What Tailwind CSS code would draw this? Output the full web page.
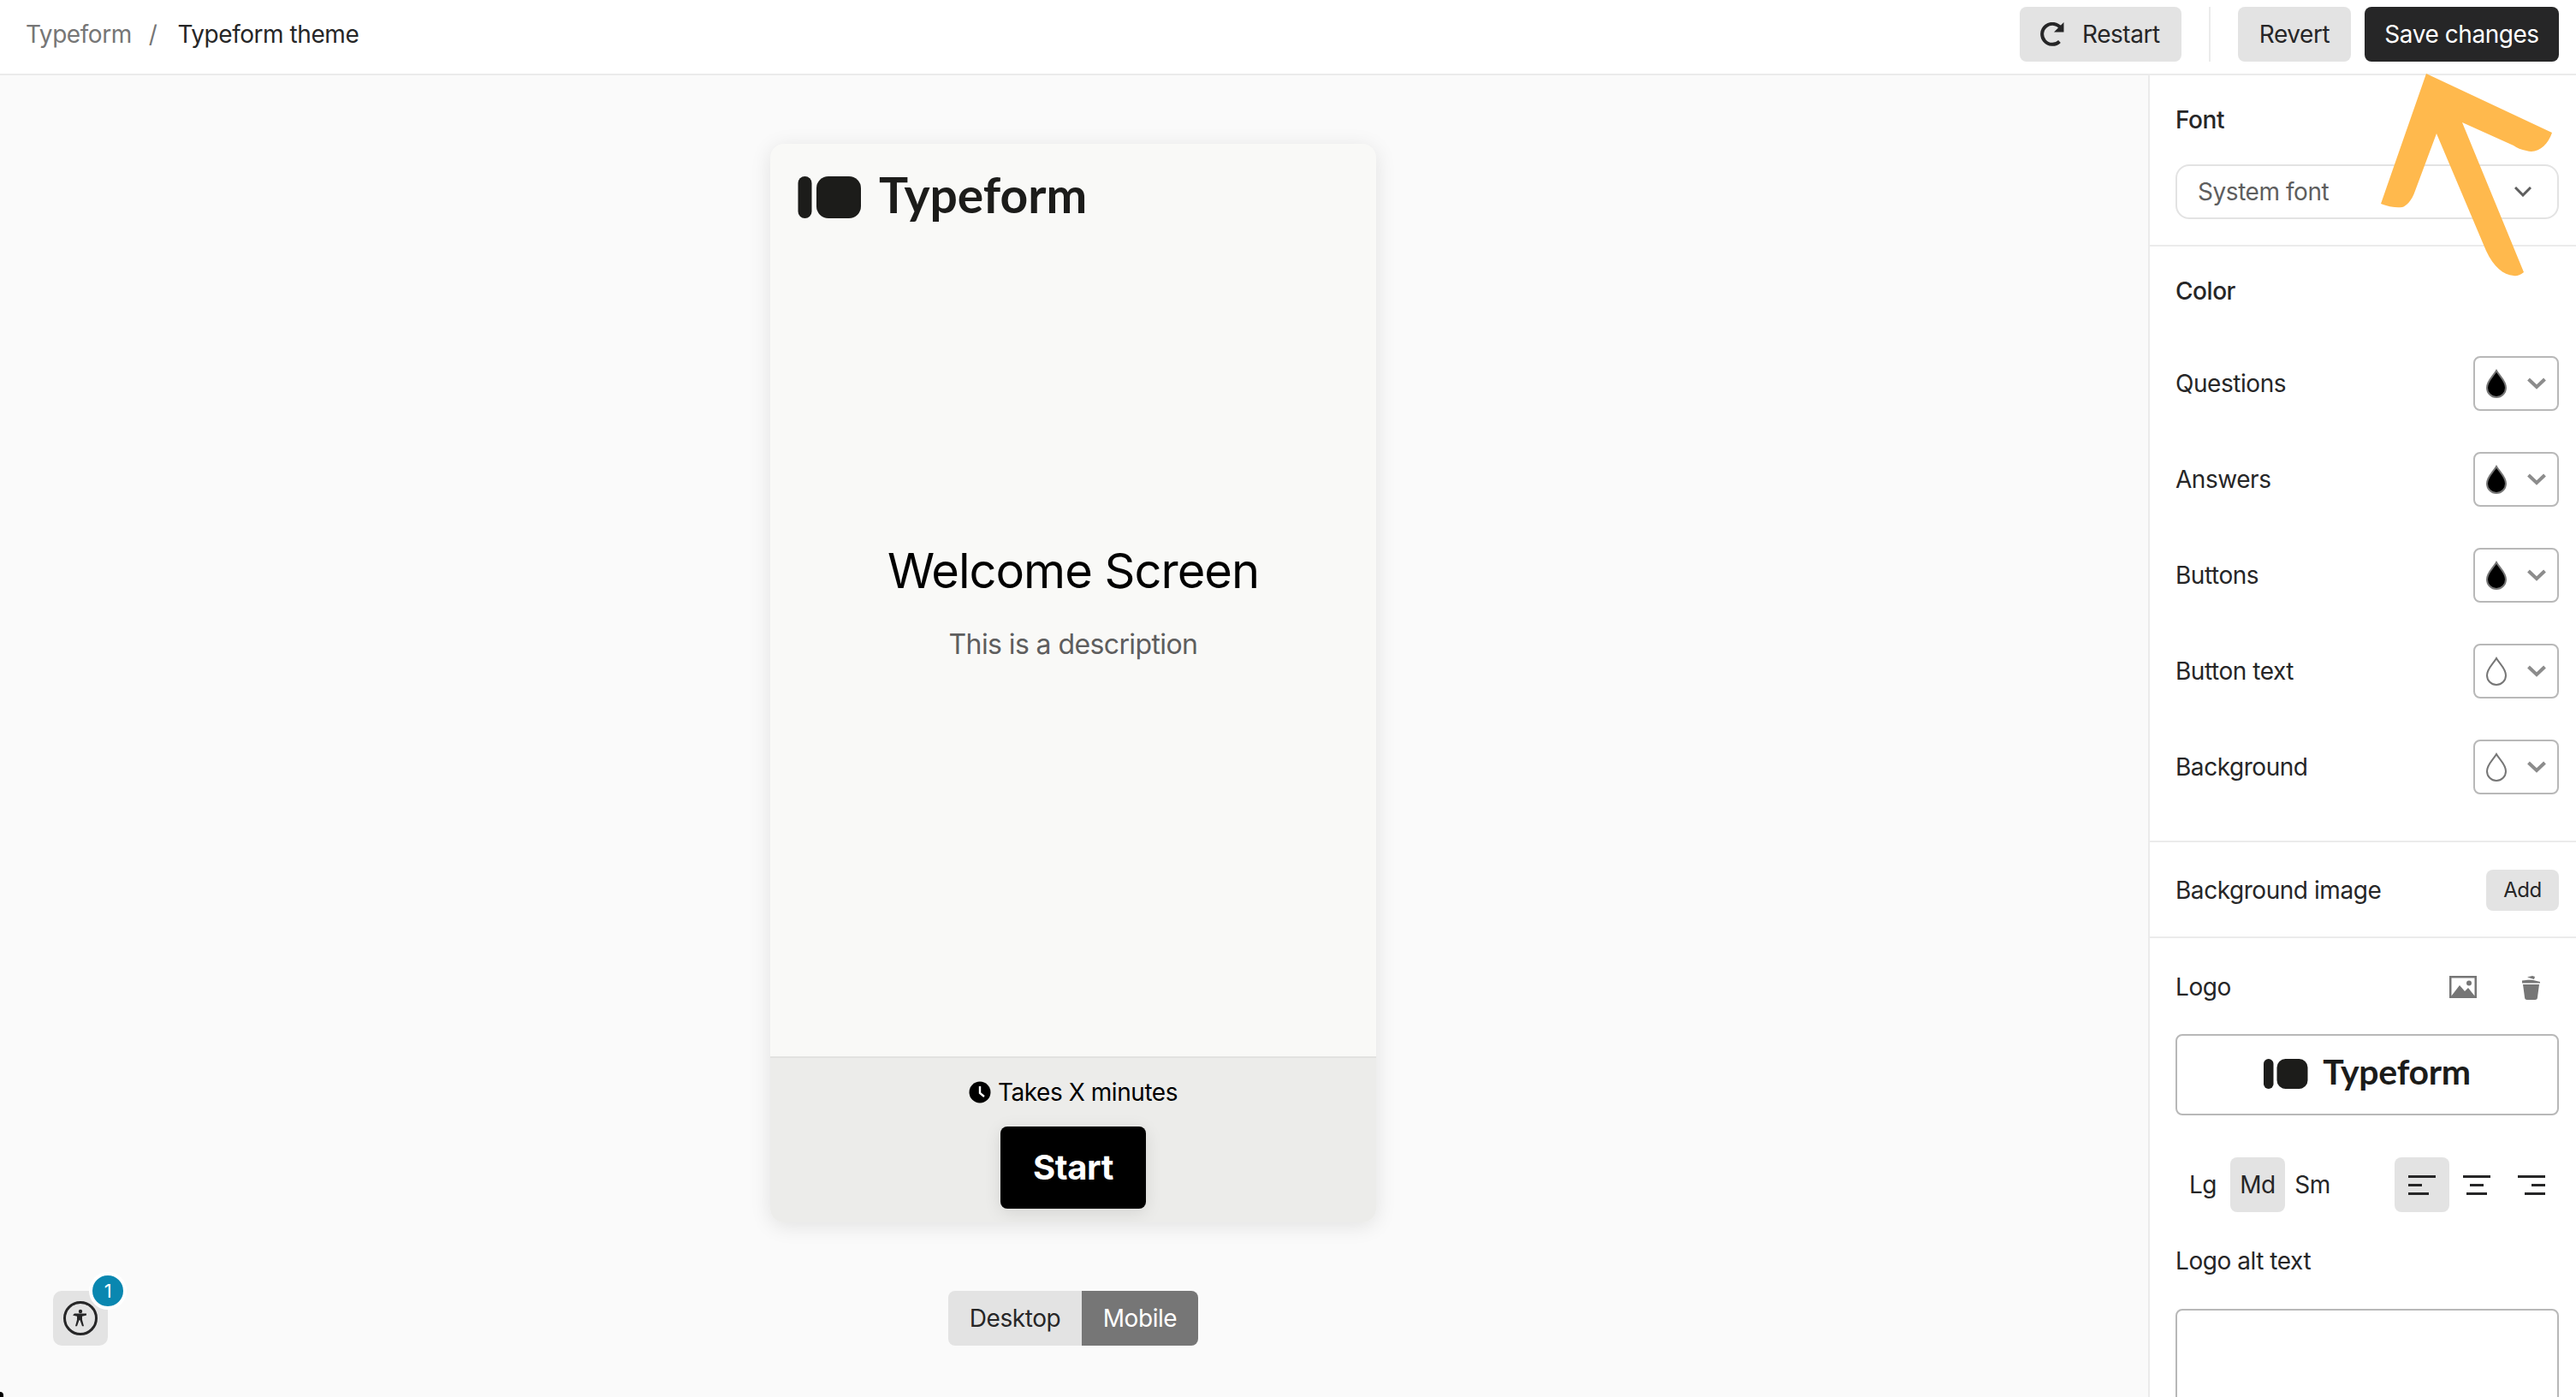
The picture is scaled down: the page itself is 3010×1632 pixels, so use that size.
<!DOCTYPE html>
<html lang="en">
<head>
    <meta charset="UTF-8">
    <title>Typeform theme</title>
    <script src="https://cdn.jsdelivr.net/npm/@tailwindcss/browser@4"></script>
</head>
<body class="font-['Inter',sans-serif] text-[28px] leading-[40px] tracking-[-0.45px] text-[#262627] bg-white">
<div class="relative w-[3010px] h-[1632px] overflow-hidden flex flex-col">

    <!-- top bar -->
    <header class="h-[88px] shrink-0 border-b-2 border-[#ebebeb] flex items-start justify-between pl-[30px] pr-[20px] pt-[8px] bg-white">
        <div class="flex items-center h-[64px]">
            <span class="text-[#767676]">Typeform</span>
            <span class="text-[#767676] ml-[20px] mr-[24px]">/</span>
            <span>Typeform theme</span>
        </div>
        <div class="flex items-center h-[64px]">
            <button class="h-[64px] w-[189px] rounded-[8px] bg-[#e3e3e3] flex items-center pl-[24px]">
                <svg class="w-[28px] h-[28px] mr-[21px]" viewBox="0 0 28 28" fill="none">
                    <path d="M22.500 22.500A12 12 0 1 1 24 7" stroke="#262627" stroke-width="4"/>
                    <path d="M27.500 0v11.500h-11.500z" fill="#262627"/>
                </svg>
                <span>Restart</span>
            </button>
            <div class="w-[2px] h-[64px] bg-[#ebebeb] ml-[32px] mr-[32px]"></div>
            <button class="h-[64px] w-[132px] rounded-[8px] bg-[#e3e3e3] text-center">Revert</button>
            <button class="h-[64px] w-[227px] rounded-[8px] bg-[#262627] text-white text-center ml-[16px]">Save changes</button>
        </div>
    </header>

    <div class="flex flex-1 min-h-0">
        <!-- preview canvas -->
        <main class="relative flex-1 bg-[#fafafa] flex flex-col items-center pr-[2px]">
            <div class="mt-[80px] w-[708px] h-[1260px] rounded-[16px] bg-[#f9f9f7] shadow-[0_4px_24px_rgba(0,0,0,0.10)] flex flex-col overflow-hidden shrink-0">
                <div class="h-[1066px] flex flex-col">
                    <div class="flex items-center pl-[32px] pt-[38px] h-[87px]">
                        <svg class="w-[74px] h-[49px]" viewBox="0 0 74 49">
                            <rect x="0.5" y="0" width="16" height="49" rx="8" fill="#1c1c1a"/>
                            <rect x="22" y="0" width="52" height="49" rx="14" fill="#1c1c1a"/>
                        </svg>
                        <span class="ml-[21px] pb-[8px] font-['Lato',sans-serif] font-bold tracking-normal text-[#1c1c1a] text-[57px] leading-[40px]">Typeform</span>
                    </div>
                    <h1 class="mt-[376px] text-center text-black text-[56px] tracking-[-1px] leading-[72px]">Welcome Screen</h1>
                    <p class="mt-[28px] text-center text-[#5e5e5e] text-[32px] tracking-[-0.6px] leading-[44px]">This is a description</p>
                </div>
                <div class="flex-1 border-t-2 border-[#e2e2e0] bg-[#ececea] flex flex-col items-center pt-[20px]">
                    <div class="flex items-center h-[40px] text-black">
                        <svg class="w-[26px] h-[26px] mr-[8px]" viewBox="0 0 26 26">
                            <circle cx="13" cy="13" r="12.5" fill="#000"/>
                            <path d="M13 6v8l5 4" fill="none" stroke="#fff" stroke-width="2.4"/>
                        </svg>
                        <span>Takes X minutes</span>
                    </div>
                    <button class="mt-[20px] w-[170px] h-[96px] rounded-[8px] bg-black text-white font-bold text-[40px] tracking-[-0.4px] shadow-[0_4px_20px_rgba(0,0,0,0.10)]">Start</button>
                </div>
            </div>

            <div class="mt-[80px] flex h-[64px] rounded-[8px] overflow-hidden shrink-0">
                <button class="w-[156px] bg-[#e3e3e3]">Desktop</button>
                <button class="w-[136px] bg-[#767676] text-white">Mobile</button>
            </div>

            <!-- accessibility widget -->
            <div class="absolute left-[62px] top-[1420px] w-[64px] h-[64px] rounded-[10px] bg-[#e3e3e3] flex items-center justify-center">
                <svg class="w-[42px] h-[42px]" viewBox="0 0 42 42" fill="none">
                    <circle cx="21" cy="21" r="18.5" stroke="#262627" stroke-width="3"/>
                    <circle cx="21" cy="13" r="2.200" fill="#262627"/>
                    <path d="M14 15.500h14v2l-5 1.200v4l2 7.500h-2l-2.500-7-1 0-2.500 7h-2l2-7.500v-4l-5-1.200z" fill="#262627"/>
                </svg>
                <div class="absolute left-[42px] -top-[22px] w-[44px] h-[44px] rounded-full bg-[#0a87b0] border-4 border-white text-white text-[22px] leading-[36px] text-center">1</div>
            </div>
        </main>

        <!-- theme settings -->
        <aside class="w-[500px] shrink-0 border-l-2 border-[#ebebeb] bg-white">
            <section class="pl-[30px] pr-[20px] pt-[32px] pb-[30px] border-b-2 border-[#ebebeb]">
                <div class="font-medium">Font</div>
                <div class="mt-[32px] h-[64px] rounded-[16px] border-2 border-[#e3e3e3] flex items-center justify-between pl-[24px] pr-[30px] text-[#5e5e5e]">
                    <span>System font</span>
                    <svg class="w-[20px] h-[12px]" viewBox="0 0 20 12" fill="none"><path d="M1 1l9 9 9-9" stroke="#5e5e5e" stroke-width="3"/></svg>
                </div>
            </section>

            <section class="pl-[30px] pr-[20px] pt-[32px] pb-[54px] border-b-2 border-[#ebebeb]">
                <div class="font-medium">Color</div>
                <div class="mt-[56px] flex flex-col gap-[48px]">
                    <div class="flex items-center justify-between h-[64px]">
                        <span>Questions</span>
                        <div class="w-[100px] h-[64px] rounded-[8px] border-2 border-[#b8b8b8] flex items-center justify-between pl-[12px] pr-[13px]">
                            <svg class="w-[26px] h-[34px]" viewBox="0 0 26 34"><path d="M13 2C9 9 2 14 2 22a11 11 0 0 0 22 0C24 14 17 9 13 2z" fill="#000" stroke="#767676" stroke-width="2"/></svg>
                            <svg class="w-[22px] h-[14px]" viewBox="0 0 22 14" fill="none"><path d="M1.500 2l9.500 9 9.500-9" stroke="#8c8c8c" stroke-width="4"/></svg>
                        </div>
                    </div>
                    <div class="flex items-center justify-between h-[64px]">
                        <span>Answers</span>
                        <div class="w-[100px] h-[64px] rounded-[8px] border-2 border-[#b8b8b8] flex items-center justify-between pl-[12px] pr-[13px]">
                            <svg class="w-[26px] h-[34px]" viewBox="0 0 26 34"><path d="M13 2C9 9 2 14 2 22a11 11 0 0 0 22 0C24 14 17 9 13 2z" fill="#000" stroke="#767676" stroke-width="2"/></svg>
                            <svg class="w-[22px] h-[14px]" viewBox="0 0 22 14" fill="none"><path d="M1.500 2l9.500 9 9.500-9" stroke="#8c8c8c" stroke-width="4"/></svg>
                        </div>
                    </div>
                    <div class="flex items-center justify-between h-[64px]">
                        <span>Buttons</span>
                        <div class="w-[100px] h-[64px] rounded-[8px] border-2 border-[#b8b8b8] flex items-center justify-between pl-[12px] pr-[13px]">
                            <svg class="w-[26px] h-[34px]" viewBox="0 0 26 34"><path d="M13 2C9 9 2 14 2 22a11 11 0 0 0 22 0C24 14 17 9 13 2z" fill="#000" stroke="#767676" stroke-width="2"/></svg>
                            <svg class="w-[22px] h-[14px]" viewBox="0 0 22 14" fill="none"><path d="M1.500 2l9.500 9 9.500-9" stroke="#8c8c8c" stroke-width="4"/></svg>
                        </div>
                    </div>
                    <div class="flex items-center justify-between h-[64px]">
                        <span>Button text</span>
                        <div class="w-[100px] h-[64px] rounded-[8px] border-2 border-[#b8b8b8] flex items-center justify-between pl-[12px] pr-[13px]">
                            <svg class="w-[26px] h-[34px]" viewBox="0 0 26 34"><path d="M13 2C9 9 2 14 2 22a11 11 0 0 0 22 0C24 14 17 9 13 2z" fill="#fff" stroke="#767676" stroke-width="2"/></svg>
                            <svg class="w-[22px] h-[14px]" viewBox="0 0 22 14" fill="none"><path d="M1.500 2l9.500 9 9.500-9" stroke="#8c8c8c" stroke-width="4"/></svg>
                        </div>
                    </div>
                    <div class="flex items-center justify-between h-[64px]">
                        <span>Background</span>
                        <div class="w-[100px] h-[64px] rounded-[8px] border-2 border-[#b8b8b8] flex items-center justify-between pl-[12px] pr-[13px]">
                            <svg class="w-[26px] h-[34px]" viewBox="0 0 26 34"><path d="M13 2C9 9 2 14 2 22a11 11 0 0 0 22 0C24 14 17 9 13 2z" fill="#fff" stroke="#767676" stroke-width="2"/></svg>
                            <svg class="w-[22px] h-[14px]" viewBox="0 0 22 14" fill="none"><path d="M1.500 2l9.500 9 9.500-9" stroke="#8c8c8c" stroke-width="4"/></svg>
                        </div>
                    </div>
                </div>
            </section>

            <section class="pl-[30px] pr-[20px] pt-[32px] pb-[30px] border-b-2 border-[#ebebeb] flex items-center justify-between">
                <span>Background image</span>
                <button class="w-[85px] h-[48px] rounded-[8px] bg-[#e3e3e3] text-[24px]">Add</button>
            </section>

            <section class="pl-[30px] pr-[20px] pt-[37px]">
                <div class="flex items-center justify-between h-[40px]">
                    <span>Logo</span>
                    <div class="flex items-center pr-[22px]">
                        <svg class="w-[32px] h-[26px]" viewBox="0 0 32 26">
                            <path d="M0 0h32v26H0zM2.500 2.500v21h27v-21z" fill="#767676"/>
                            <path d="M2 24l10-13 6 7 4-4 8 10z" fill="#767676"/>
                            <circle cx="23" cy="8.500" r="3" fill="#767676"/>
                        </svg>
                        <svg class="w-[21px] h-[29px] ml-[53px]" viewBox="0 0 21 29">
                            <path d="M0 6.500c6-1 9-1 13-.5l8 2v1.500H0z" fill="#767676"/>
                            <path d="M6 2.500l6-1.500 3 1-1 3z" fill="#767676"/>
                            <path d="M1 11h19l-2 15a3 3 0 0 1-3 3H6a3 3 0 0 1-3-3z" fill="#767676"/>
                        </svg>
                    </div>
                </div>
                <div class="mt-[35px] h-[95px] rounded-[8px] border-2 border-[#b8b8b8] flex items-center justify-center pb-[2px]">
                    <svg class="w-[52px] h-[35px]" viewBox="0 0 52 35">
                        <rect x="0" y="0" width="11.500" height="35" rx="5.700" fill="#1c1c1a"/>
                        <rect x="15.500" y="0" width="36" height="35" rx="10" fill="#1c1c1a"/>
                    </svg>
                    <span class="ml-[17px] pb-[6px] font-['Lato',sans-serif] font-bold tracking-[-0.3px] text-[#1c1c1a] text-[41px] leading-[36px]">Typeform</span>
                </div>
                <div class="mt-[49px] flex items-center justify-between">
                    <div class="flex">
                        <button class="w-[64px] h-[64px] rounded-[8px]">Lg</button>
                        <button class="w-[64px] h-[64px] rounded-[8px] bg-[#e3e3e3]">Md</button>
                        <button class="w-[64px] h-[64px] rounded-[8px]">Sm</button>
                    </div>
                    <div class="flex">
                        <button class="w-[64px] h-[64px] rounded-[8px] bg-[#e3e3e3] flex items-center justify-center">
                            <svg class="w-[32px] h-[23px]" viewBox="0 0 32 23" fill="#262627"><rect width="32" height="3"/><rect y="10" width="16" height="3"/><rect y="20" width="24" height="3"/></svg>
                        </button>
                        <button class="w-[64px] h-[64px] rounded-[8px] flex items-center justify-center">
                            <svg class="w-[32px] h-[23px]" viewBox="0 0 32 23" fill="#262627"><rect width="32" height="3"/><rect x="8" y="10" width="16" height="3"/><rect x="4" y="20" width="24" height="3"/></svg>
                        </button>
                        <button class="w-[64px] h-[64px] rounded-[8px] flex items-center justify-center">
                            <svg class="w-[32px] h-[23px]" viewBox="0 0 32 23" fill="#262627"><rect width="32" height="3"/><rect x="16" y="10" width="16" height="3"/><rect x="8" y="20" width="24" height="3"/></svg>
                        </button>
                    </div>
                </div>
                <div class="mt-[37px]">Logo alt text</div>
                <div class="mt-[36px] h-[200px] rounded-[8px] border-2 border-[#b8b8b8]"></div>
            </section>
        </aside>
    </div>

    <!-- annotation arrow drawn over the screenshot -->
    <svg class="absolute left-[2770px] top-[80px] w-[220px] h-[250px] pointer-events-none" viewBox="2770 80 220 250">
        <path d="M2835 86L2982 155C2977 170 2965 180 2952 176C2946 175 2941 173 2937 170L2877 143L2949 318C2944 322 2940 323 2937 322C2925 321 2914 312 2905 293L2847 156L2822 223C2818 235 2811 241 2807 242C2798 243 2790 241 2782 238Z" fill="#ffb94d"/>
    </svg>

    <!-- window corner -->
    <div class="absolute left-0 bottom-0 w-[4px] h-[6px] bg-black rounded-tr-full"></div>
</div>
</body>
</html>
